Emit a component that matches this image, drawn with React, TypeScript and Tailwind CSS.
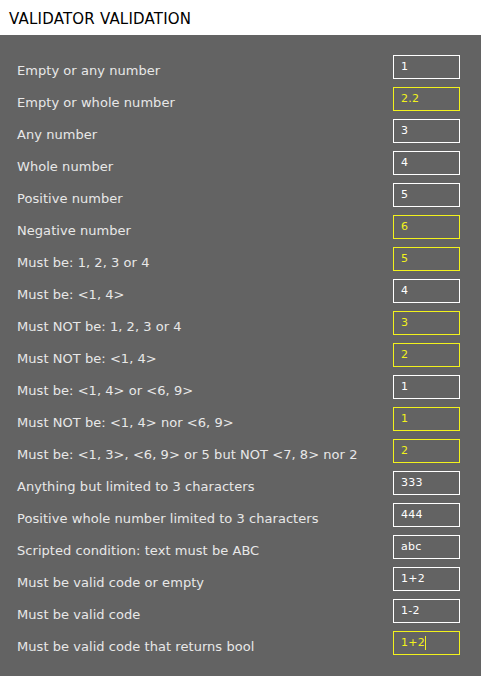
import React from "react";

interface Field {
  label: string;
  value: string;
  invalid?: boolean;
  focused?: boolean;
}

const FIELDS: Field[] = [
  { label: "Empty or any number", value: "1" },
  { label: "Empty or whole number", value: "2.2", invalid: true },
  { label: "Any number", value: "3" },
  { label: "Whole number", value: "4" },
  { label: "Positive number", value: "5" },
  { label: "Negative number", value: "6", invalid: true },
  { label: "Must be: 1, 2, 3 or 4", value: "5", invalid: true },
  { label: "Must be: <1, 4>", value: "4" },
  { label: "Must NOT be: 1, 2, 3 or 4", value: "3", invalid: true },
  { label: "Must NOT be: <1, 4>", value: "2", invalid: true },
  { label: "Must be: <1, 4> or <6, 9>", value: "1" },
  { label: "Must NOT be: <1, 4> nor <6, 9>", value: "1", invalid: true },
  { label: "Must be: <1, 3>, <6, 9> or 5 but NOT <7, 8> nor 2", value: "2", invalid: true },
  { label: "Anything but limited to 3 characters", value: "333" },
  { label: "Positive whole number limited to 3 characters", value: "444" },
  { label: "Scripted condition: text must be ABC", value: "abc" },
  { label: "Must be valid code or empty", value: "1+2" },
  { label: "Must be valid code", value: "1-2" },
  { label: "Must be valid code that returns bool", value: "1+2", invalid: true, focused: true },
];

const Row: React.FC<{ field: Field }> = ({ field }) => {
  const color = field.invalid ? "border-[#f2f21c] text-[#f2f21c]" : "border-white text-white";
  return (
    <div className="flex items-center h-[32px]">
      <div className="flex-1 pl-[17px] pt-[8px] whitespace-nowrap text-[13px] tracking-[0.05px] text-[#e8e8e8]">
        {field.label}
      </div>
      <div
        className={`w-[67px] h-[24px] mr-[21px] border flex items-center pl-[7px] text-[11px] tracking-[0.3px] ${color}`}
      >
        {field.value}
        {field.focused && <span className="inline-block w-px h-[14px] bg-[#f2f21c]" />}
      </div>
    </div>
  );
};

export default function App() {
  return (
    <div className="w-[482px] h-[676px] bg-white flex flex-col" style={{ fontFamily: '"DejaVu Sans", sans-serif' }}>
      <div className="h-[35px] pl-[9px] pt-[9px] text-[15px] tracking-[0.2px] text-black leading-[20px]">
        VALIDATOR VALIDATION
      </div>
      <div className="flex-1 bg-[#636363] mr-[1px] pt-[16px]">
        {FIELDS.map((f, i) => (
          <Row key={i} field={f} />
        ))}
      </div>
    </div>
  );
}
